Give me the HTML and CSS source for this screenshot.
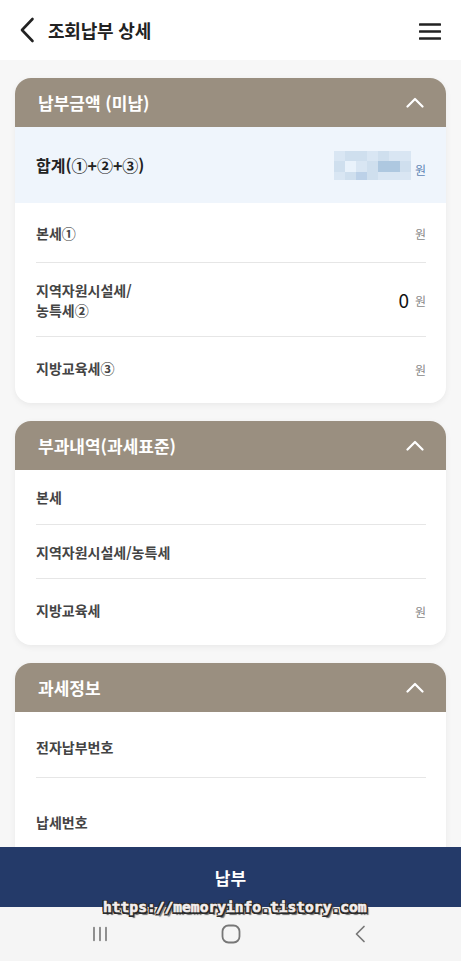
FILE: index.html
```html
<!DOCTYPE html>
<html lang="ko">
<head>
  <meta charset="UTF-8" />
  <meta name="viewport" content="width=device-width, initial-scale=1.0"/>
  <title>조회납부 상세</title>
  <link rel="stylesheet" href="styles.css">
</head>
<body>
  <div class="app">
    <header class="topbar">
      <div class="topbar-left">
        <svg class="back" width="16" height="26" viewBox="0 0 16 26">
          <path d="M13.5 2 L3 13 L13.5 24" fill="none" stroke="#222" stroke-width="2.6" stroke-linecap="round" stroke-linejoin="round"/>
        </svg>
        <h1>조회납부 상세</h1>
      </div>
      <svg class="menu" width="22" height="18" viewBox="0 0 22 18">
        <path d="M1 2.5 H21 M1 9.5 H21 M1 16.5 H21" stroke="#222" stroke-width="2.6" stroke-linecap="round"/>
      </svg>
    </header>

    <main class="content">
      <section class="card">
        <div class="card-head">
          <span>납부금액 (미납)</span>
          <svg class="fold" width="18" height="11" viewBox="0 0 18 11">
            <path d="M1.5 9.5 L9 2 L16.5 9.5" fill="none" stroke="#fff" stroke-width="2.2" stroke-linecap="round" stroke-linejoin="round"/>
          </svg>
        </div>
        <div class="total">
          <span class="total-label">합계(①+②+③)</span>
          <span class="value">
            <span class="mosaic">
              <i class="m1"></i><i class="m2"></i><i class="m2"></i><i class="m1"></i><i class="m2"></i><i class="m1"></i><i class="m1"></i>
              <i class="m2"></i><i class="m0"></i><i class="m1"></i><i class="m2"></i><i class="m4"></i><i class="m4"></i><i class="m2"></i>
              <i class="m1"></i><i class="m2"></i><i class="m3"></i><i class="m2"></i><i class="m1"></i><i class="m1"></i><i class="m1"></i>
            </span>
            <span class="won won-blue">원</span>
          </span>
        </div>
        <div class="rows">
          <div class="row r60"><span class="label">본세①</span><span class="won">원</span></div>
          <div class="row r74"><span class="label">지역자원시설세/<br>농특세②</span><span class="value"><span class="num">0</span><span class="won">원</span></span></div>
          <div class="row r62 last"><span class="label">지방교육세③</span><span class="won">원</span></div>
        </div>
      </section>

      <section class="card">
        <div class="card-head">
          <span>부과내역(과세표준)</span>
          <svg class="fold" width="18" height="11" viewBox="0 0 18 11">
            <path d="M1.5 9.5 L9 2 L16.5 9.5" fill="none" stroke="#fff" stroke-width="2.2" stroke-linecap="round" stroke-linejoin="round"/>
          </svg>
        </div>
        <div class="rows">
          <div class="row r55"><span class="label">본세</span></div>
          <div class="row r54"><span class="label">지역자원시설세/농특세</span></div>
          <div class="row r62 last"><span class="label">지방교육세</span><span class="won">원</span></div>
        </div>
      </section>

      <section class="card">
        <div class="card-head">
          <span>과세정보</span>
          <svg class="fold" width="18" height="11" viewBox="0 0 18 11">
            <path d="M1.5 9.5 L9 2 L16.5 9.5" fill="none" stroke="#fff" stroke-width="2.2" stroke-linecap="round" stroke-linejoin="round"/>
          </svg>
        </div>
        <div class="rows">
          <div class="row r66 tall"><span class="label">전자납부번호</span></div>
          <div class="row r90 tall"><span class="label">납세번호</span></div>
        </div>
      </section>
    </main>

    <div class="paybar">
      <button class="pay">납부</button>
      <span class="watermark">https://memoryinfo.tistory.com</span>
    </div>

    <nav class="sysnav">
      <svg width="16" height="16" viewBox="0 0 16 16">
        <path d="M2 1.5 V14.5 M8 1.5 V14.5 M14 1.5 V14.5" stroke="#777" stroke-width="1.6" stroke-linecap="round"/>
      </svg>
      <svg width="20" height="20" viewBox="0 0 20 20">
        <rect x="1.5" y="1.5" width="17" height="17" rx="6" fill="none" stroke="#777" stroke-width="1.8"/>
      </svg>
      <svg width="12" height="18" viewBox="0 0 12 18">
        <path d="M10 1.5 L2.5 9 L10 16.5" fill="none" stroke="#777" stroke-width="1.7" stroke-linecap="round" stroke-linejoin="round"/>
      </svg>
    </nav>
  </div>
</body>
</html>
```

FILE: styles.css
```css
* { box-sizing: border-box; }

html, body {
  margin: 0;
  padding: 0;
  height: 100%;
}

body {
  font-family: "Noto Sans CJK KR", "Noto Sans", sans-serif;
  background-color: #f7f7f7;
  color: #222;
}

.app {
  height: 100vh;
  display: flex;
  flex-direction: column;
  overflow: hidden;
}

/* top bar */
.topbar {
  height: 60px;
  flex: none;
  background: #fff;
  display: flex;
  align-items: center;
  justify-content: space-between;
  padding: 0 20px 0 19px;
}

.topbar-left {
  display: flex;
  align-items: center;
  gap: 13px;
}

.topbar h1 {
  margin: 0;
  font-size: 18px;
  font-weight: 700;
  letter-spacing: -0.2px;
  color: #222;
}

.menu { margin-top: 2px; }

/* content */
.content {
  flex: 1;
  overflow: hidden;
  padding: 18px 15px 0;
  display: flex;
  flex-direction: column;
  gap: 18px;
}

.card {
  flex: none;
  background: #fff;
  border-radius: 16px;
  overflow: hidden;
  box-shadow: 0 2px 6px rgba(0, 0, 0, 0.06);
}

.card-head {
  height: 49px;
  background: #9a8f80;
  color: #fff;
  display: flex;
  align-items: center;
  justify-content: space-between;
  padding: 0 22px 0 23px;
  font-size: 17px;
  font-weight: 700;
}

.total {
  height: 76px;
  background: #eff5fc;
  display: flex;
  align-items: center;
  justify-content: space-between;
  padding: 0 20px 0 21px;
}

.total-label {
  font-size: 16px;
  font-weight: 700;
  color: #222;
}

.value {
  display: flex;
  align-items: center;
  gap: 6px;
}

.mosaic {
  display: grid;
  grid-template-columns: repeat(7, 11px);
  grid-template-rows: 10px 11px 8px;
  width: 75px;
}

.mosaic i { display: block; }
.m0 { background: #e9f2fb; }
.m1 { background: #d9e6f3; }
.m2 { background: #cfdfee; }
.m3 { background: #bcd1e8; }
.m4 { background: #aec8e0; }

.won {
  font-size: 12px;
  color: #888;
  margin-top: 2px;
}

.won-blue { color: #5f86b5; margin-top: 8px; }

.num {
  font-size: 19px;
  font-weight: 400;
  color: #111;
}

.rows { padding-bottom: 4px; }

.row {
  margin: 0 20px 0 21px;
  display: flex;
  align-items: center;
  justify-content: space-between;
  border-bottom: 1px solid #e6e6e6;
}

.row.last { border-bottom: none; }

.label {
  font-size: 14px;
  font-weight: 700;
  color: #444;
  line-height: 20px;
}

.r54 { height: 54px; }
.r55 { height: 55px; }
.r60 { height: 60px; }
.r62 { height: 62px; }
.r66 { height: 66px; }
.r74 { height: 74px; }
.r90 { height: 90px; }

.tall { align-items: flex-start; padding-top: 25px; }
.r90.tall { padding-top: 34px; }

/* pay button */
.paybar {
  position: relative;
  flex: none;
}

.pay {
  display: block;
  width: 100%;
  height: 60px;
  border: none;
  background: #243a69;
  color: #fff;
  font-family: inherit;
  font-size: 17px;
  font-weight: 700;
  padding: 0;
}

.watermark {
  position: absolute;
  left: 103px;
  bottom: -8px;
  font-family: "DejaVu Sans Mono", monospace;
  font-weight: 700;
  font-size: 14.6px;
  color: #f3eeee;
  -webkit-text-stroke: 0.6px #f3eeee;
  text-shadow:
    -1.5px -1.5px 0 #2a2a2a, 1.5px -1.5px 0 #2a2a2a, -1.5px 1.5px 0 #2a2a2a, 1.5px 1.5px 0 #2a2a2a,
    0 -1.5px 0 #2a2a2a, 0 1.5px 0 #2a2a2a, -1.5px 0 0 #2a2a2a, 1.5px 0 0 #2a2a2a,
    2.5px 2.5px 1px #666;
}

/* system nav */
.sysnav {
  height: 54px;
  flex: none;
  background: #f5f5f5;
  display: flex;
  align-items: center;
  gap: 113px;
  padding-left: 92px;
}
```
